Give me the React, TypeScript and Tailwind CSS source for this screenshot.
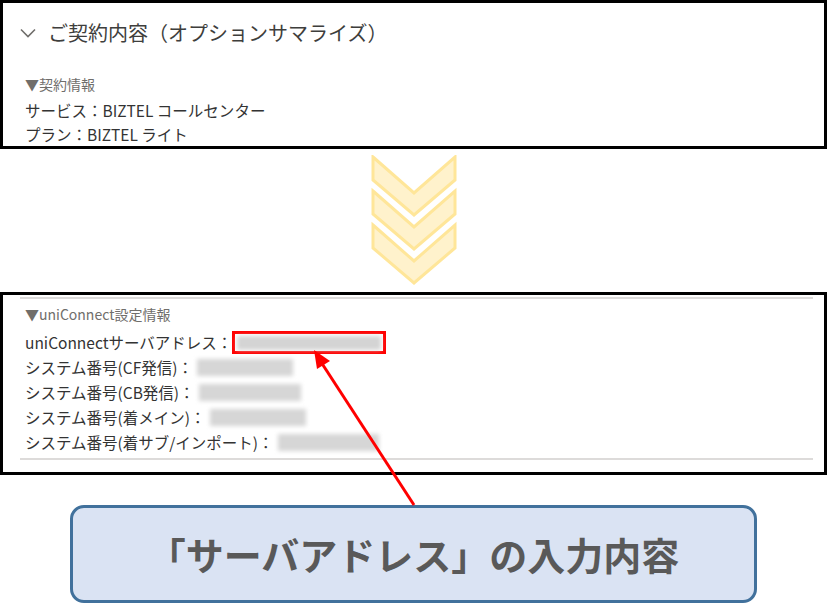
export default function App() {
  const font = "font-['Noto_Sans_CJK_JP','Noto_Sans',sans-serif]";
  return (
    <div className={`relative h-[606px] w-[827px] overflow-hidden bg-white ${font}`}>
      {/* before */}
      <div className="h-[149px] w-[827px] border-[3px] border-black pl-[17px] pt-[17px]">
        <div className="flex h-[26px] items-center gap-[12px]">
          <svg width="16" height="10" viewBox="0 0 16 10" fill="none">
            <path d="M1 1.5 L8 8.5 L15 1.5" stroke="#706e6b" strokeWidth="1.6" />
          </svg>
          <span className="text-[20px] leading-[26px] text-[#3e3e3c]">
            ご契約内容（オプションサマライズ）
          </span>
        </div>
        <div className="mt-[28px] pl-[5px]">
          <div className="text-[14px] leading-[20px] text-[#706e6b]">▼契約情報</div>
          <div className="mt-[4px] text-[15.5px] leading-[24px] text-[#333]">
            <div>サービス：BIZTEL コールセンター</div>
            <div>プラン：BIZTEL ライト</div>
          </div>
        </div>
      </div>

      {/* down arrows */}
      <div className="flex h-[143px] justify-center pt-[6px]">
        <svg width="86" height="132" viewBox="0 0 86 132">
          {[0, 34, 68].map((dy) => (
            <path
              key={dy}
              d={`M2 ${2 + dy} L43 ${38 + dy} L84 ${2 + dy} L84 ${25 + dy} L43 ${60 + dy} L2 ${25 + dy} Z`}
              fill="#fff2cc"
              stroke="#ffe699"
              strokeWidth="3"
            />
          ))}
        </svg>
      </div>

      {/* after */}
      <div className="h-[183px] w-[827px] border-[3px] border-black">
        <div className="ml-[17px] mr-[11px] mt-[2px] h-[2px] bg-[#dddbda]" />
        <div className="pl-[22px]">
          <div className="mt-[5px] text-[14px] leading-[20px] text-[#706e6b]">▼uniConnect設定情報</div>
          <div className="mt-[6px] text-[15.5px] leading-[25px] text-[#333]">
            <div className="flex items-center">
              <span>uniConnectサーバアドレス：</span>
              <div className="flex h-[23px] w-[154px] items-center border-[3px] border-[#ff0000] px-[2px]">
                <div className="h-[14px] w-full bg-[#d4d4d4] blur-[2px]" />
              </div>
            </div>
            <div className="flex items-center">
              <span>システム番号(CF発信)：</span>
              <div className="ml-[4px] h-[17px] w-[96px] bg-[#d6d6d6] blur-[2px]" />
            </div>
            <div className="flex items-center">
              <span>システム番号(CB発信)：</span>
              <div className="ml-[4px] h-[17px] w-[102px] bg-[#d6d6d6] blur-[2px]" />
            </div>
            <div className="flex items-center">
              <span>システム番号(着メイン)：</span>
              <div className="ml-[4px] h-[17px] w-[96px] bg-[#d6d6d6] blur-[2px]" />
            </div>
            <div className="flex items-center">
              <span>システム番号(着サブ/インポート)：</span>
              <div className="ml-[4px] h-[17px] w-[101px] bg-[#d6d6d6] blur-[2px]" />
            </div>
          </div>
        </div>
        <div className="ml-[17px] mr-[11px] mt-[3px] h-[2px] bg-[#dddbda]" />
      </div>

      {/* callout */}
      <div className="ml-[70px] mt-[30px] flex h-[98px] w-[687px] items-center justify-center rounded-[14px] border-[3px] border-[#41719c] bg-[#dae3f3]">
        <span className="text-[38px] font-bold leading-none text-[#595959]">
          「サーバアドレス」の入力内容
        </span>
      </div>

      {/* pointer arrow */}
      <svg className="pointer-events-none absolute left-0 top-0" width="827" height="606">
        <line x1="414" y1="505" x2="321" y2="362" stroke="#ff0000" strokeWidth="3" />
        <polygon points="314,350 330,361 317,369" fill="#ff0000" />
      </svg>
    </div>
  );
}
